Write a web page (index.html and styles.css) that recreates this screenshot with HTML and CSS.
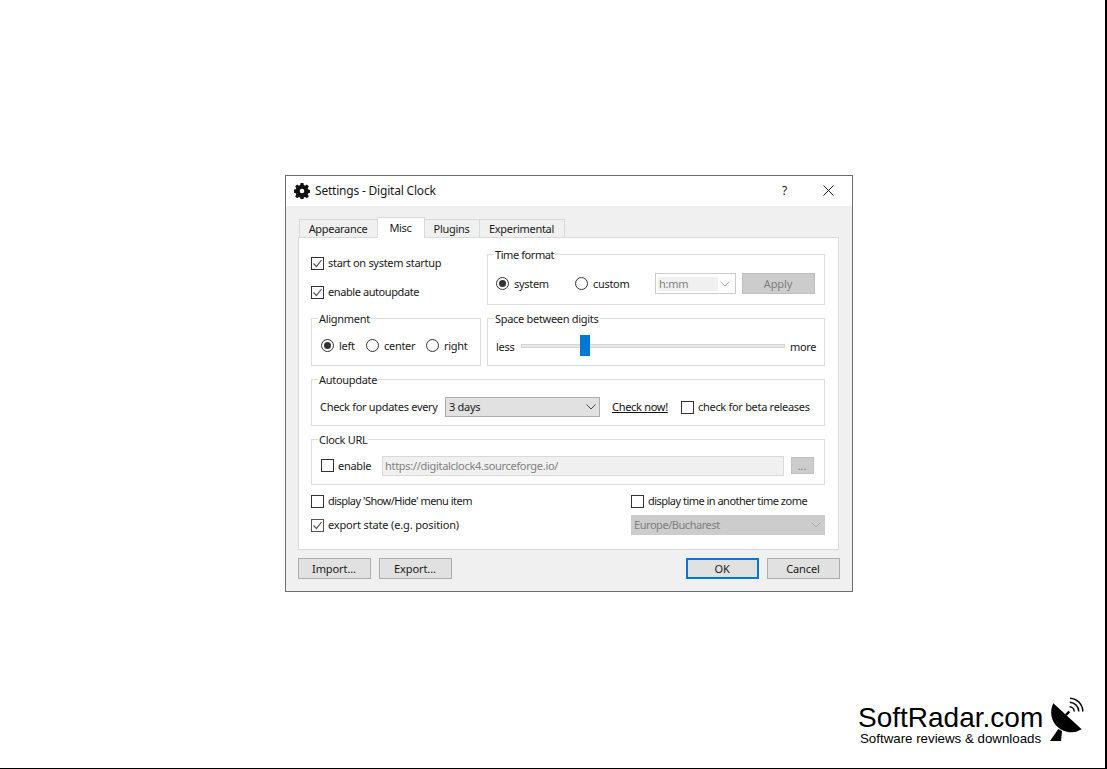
FILE: index.html
```html
<!DOCTYPE html>
<html lang="en">
<head>
<meta charset="utf-8">
<title>Settings - Digital Clock</title>
<link rel="stylesheet" href="styles.css">
</head>
<body>
<div class="page">
  <section class="dialog">
    <header class="titlebar">
      <svg class="gear" viewBox="0 0 16 16"><path d="M6.600 0h2.800l.4 2.100 1.300.6L12.900 1.500l2 2-1.200 1.800.5 1.300 2 .4v2.800l-2 .4-.5 1.300 1.200 1.800-2 2-1.800-1.200-1.300.5-.4 2.100H6.600l-.4-2.100-1.300-.5-1.800 1.200-2-2 1.200-1.800-.5-1.300-2-.4V6.600l2-.4.5-1.300L1.100 3.500l2-2 1.800 1.200 1.300-.6zM8 5.700a2.300 2.300 0 1 0 0 4.600 2.300 2.300 0 0 0 0-4.600z" fill-rule="evenodd"/></svg>
      <span class="title">Settings - Digital Clock</span>
      <span class="help">?</span>
      <svg class="close" viewBox="0 0 11 11"><path d="M.5.5l10 10M10.500.5l-10 10"/></svg>
    </header>
    <div class="body">
      <nav class="tabs">
        <span class="tab t1">Appearance</span>
        <span class="tab active t2">Misc</span>
        <span class="tab t3">Plugins</span>
        <span class="tab t4">Experimental</span>
      </nav>
      <div class="pane">
        <div class="grid">
          <div class="stack">
            <label class="check"><span class="box on"><svg viewBox="0 0 11 11"><path d="M1.500 5.500l3 3 5-6.500"/></svg></span>start on system startup</label>
            <label class="check tight-1"><span class="box on"><svg viewBox="0 0 11 11"><path d="M1.500 5.500l3 3 5-6.500"/></svg></span>enable autoupdate</label>
          </div>
          <div class="group g-time">
            <span class="legend tight-1">Time format</span>
            <span class="radio on"></span><span class="lbl w-system">system</span>
            <span class="radio"></span><span class="lbl w-custom">custom</span>
            <span class="combo-edit"><span class="edit-val">h:mm</span><svg class="chev light" viewBox="0 0 10 6"><path d="M.5.5L5 5 9.500.5"/></svg></span>
            <span class="btn disabled apply">Apply</span>
          </div>
          <div class="group g-align">
            <span class="legend">Alignment</span>
            <span class="radio on"></span><span class="lbl w-left">left</span>
            <span class="radio"></span><span class="lbl w-center">center</span>
            <span class="radio"></span><span class="lbl">right</span>
          </div>
          <div class="group g-space">
            <span class="legend">Space between digits</span>
            <span class="lbl less">less</span>
            <div class="slider"><span class="groove"></span><span class="thumb"></span></div>
            <span class="lbl more">more</span>
          </div>
          <div class="group wide g-update">
            <span class="legend">Autoupdate</span>
            <span class="lbl w-every">Check for updates every</span>
            <span class="combo days"><span>3 days</span><svg class="chev" viewBox="0 0 10 6"><path d="M.5.5L5 5 9.500.5"/></svg></span>
            <a class="link">Check now!</a>
            <label class="check"><span class="box"></span>check for beta releases</label>
          </div>
          <div class="group wide g-url">
            <span class="legend">Clock URL</span>
            <label class="check url-check"><span class="box"></span>enable</label>
            <span class="url">https://digitalclock4.sourceforge.io/</span>
            <span class="btn disabled dots">...</span>
          </div>
        </div>
        <div class="lower">
          <div class="lower-left">
            <label class="check tight-2"><span class="box"></span>display 'Show/Hide' menu item</label>
            <label class="check loose"><span class="box on dim"><svg viewBox="0 0 11 11"><path d="M1.500 5.500l3 3 5-6.500"/></svg></span>export state (e.g. position)</label>
          </div>
          <div class="lower-right">
            <label class="check tight-2"><span class="box"></span>display time in another time zome</label>
            <span class="combo zone"><span>Europe/Bucharest</span><svg class="chev light" viewBox="0 0 10 6"><path d="M.5.5L5 5 9.500.5"/></svg></span>
          </div>
        </div>
      </div>
      <footer class="actions">
        <span class="btn">Import...</span>
        <span class="btn">Export...</span>
        <span class="spacer"></span>
        <span class="btn primary">OK</span>
        <span class="btn">Cancel</span>
      </footer>
    </div>
  </section>
  <div class="brand">
    <div class="brand-text">
      <div class="brand-name">SoftRadar.com</div>
      <div class="brand-sub">Software reviews &amp; downloads</div>
    </div>
    <svg class="dish" viewBox="0 0 36 46">
      <path d="M5.300 .3A20 20 0 0 0 33.700 26.300Z"/>
      <path d="M10.300 26L2 38h11L14 28z"/>
      <path class="feed" d="M18 12l3.300-3.500"/>
      <path class="wave" d="M21.500 3.700A5 5 0 0 1 26.300 8.500M21.800 -.8A9.500 9.500 0 0 1 30.800 8.500M22 -4.800A13.500 13.500 0 0 1 34.800 8.500"/>
    </svg>
  </div>
</div>
</body>
</html>
```
FILE: styles.css
```css
* { box-sizing: border-box; }
html, body { margin: 0; height: 100%; background: #fff; }
body { font-family: "Noto Sans", "Open Sans", sans-serif; font-size: 11px; line-height: 14px; color: #1a1a1a; letter-spacing: -0.3px; }
.page { width: 1107px; height: 769px; position: relative; border-right: 2px solid #000; border-bottom: 1px solid #000; padding: 175px 0 0 285px; overflow: hidden; }
.dialog { width: 568px; height: 417px; border: 1px solid #6e6e6e; background: #f0f0f0; display: flex; flex-direction: column; }
.titlebar { height: 30px; background: #fff; display: flex; align-items: center; padding: 0 18px 0 8px; font-size: 12px; letter-spacing: -0.2px; }
.gear { width: 16px; height: 16px; fill: #111; margin: -1px 5px 0 0; }
.title { flex: 1; }
.help { margin-right: 36px; }
.close { width: 11px; height: 11px; fill: none; stroke: #222; stroke-width: 1; margin-top: -1px; }
.body { flex: 1; display: flex; flex-direction: column; padding: 12px 12px 0; }
.tabs { display: flex; height: 20px; padding-left: 1px; align-items: flex-end; position: relative; z-index: 1; margin-bottom: -1px; }
.tab { height: 18px; margin-bottom: 1px; border: 1px solid #d9d9d9; border-bottom: 0; margin-right: -1px; display: flex; align-items: center; justify-content: center; background: #f0f0f0; padding: 1px 1px 0 0; }
.tab.active { height: 21px; margin-bottom: 0; background: #fff; padding-top: 0; position: relative; z-index: 1; }
.t1 { width: 79px; }
.t2 { width: 48px; }
.t3 { width: 56px; }
.t4 { width: 86px; }
.pane { width: 541px; height: 313px; background: #fff; border: 1px solid #d9d9d9; padding: 16px 0 0 12px; }
.grid { display: grid; grid-template-columns: 170px 338px; column-gap: 6px; grid-template-rows: 51px 48px 47px 46px; row-gap: 13px; }
.group { border: 1px solid #dcdcdc; position: relative; display: flex; align-items: center; }
.legend { position: absolute; left: 6px; top: -7px; background: #fff; padding: 0 1px; height: 14px; }
.wide { grid-column: 1 / 3; }
.tight-1 { letter-spacing: -0.42px; }
.tight-2 { letter-spacing: -0.52px; }
.loose { letter-spacing: -0.15px; }
.stack { display: flex; flex-direction: column; gap: 15px; padding-top: 2px; }
.check { display: flex; align-items: center; height: 14px; white-space: nowrap; }
.box { width: 13px; height: 13px; border: 1px solid #333; margin-right: 4px; flex: none; display: block; background: #fff; }
.box svg { display: block; width: 11px; height: 11px; fill: none; stroke: #555; stroke-width: 1.200; }
.box.dim { border-color: #555; }
.radio { width: 13px; height: 13px; border: 1px solid #333; border-radius: 50%; flex: none; display: block; position: relative; background: #fff; }
.radio.on::after { content: ""; position: absolute; inset: 2px; border-radius: 50%; background: #333; }
.lbl { margin-left: 5px; white-space: nowrap; flex: none; }
.g-time { padding: 8px 0 0 8px; }
.w-system { width: 61px; }
.w-custom { width: 62px; }
.combo-edit { width: 81px; height: 21px; border: 1px solid #ccc; padding: 2px; display: flex; align-items: center; color: #808080; flex: none; }
.edit-val { width: 60px; height: 14px; background: #f0f0f0; padding-left: 1px; }
.chev { width: 10px; height: 6px; fill: none; stroke: #444; margin-left: auto; margin-right: 3px; flex: none; }
.chev.light { stroke: #aaa; }
.btn { height: 21px; width: 73px; flex: none; background: #e1e1e1; border: 1px solid #adadad; display: flex; align-items: center; justify-content: center; padding-right: 1px; letter-spacing: -0.1px; }
.btn.disabled { background: #ccc; border-color: #bfbfbf; color: #808080; }
.apply { margin-left: 6px; }
.g-align { padding: 7px 0 0 9px; }
.w-left { width: 22px; }
.w-center { width: 37px; }
.g-align .w-left + .radio { margin-left: 5px; }
.g-align .w-center + .radio { margin-left: 5px; }
.g-space { padding: 7px 9px 0 8px; }
.less { width: 20px; margin: 2px 0 0; }
.more { width: 25px; margin: 2px 0 0; }
.slider { flex: 1; height: 21px; position: relative; margin: 0 5px; display: flex; align-items: center; }
.groove { display: block; width: 100%; height: 4px; background: #e7e7e7; border: 1px solid #d6d6d6; }
.thumb { position: absolute; left: 59px; top: 0; width: 10px; height: 21px; background: #0078d7; }
.g-update { padding: 9px 0 0 8px; }
.w-every { margin: 0; width: 125px; }
.combo { height: 20px; flex: none; background: #e1e1e1; border: 1px solid #adadad; display: flex; align-items: center; padding-left: 3px; }
.days { width: 155px; }
.link { width: 56px; color: #111; text-decoration: underline; margin-left: 12px; margin-right: 13px; white-space: nowrap; }
.g-url { padding: 7px 0 0 9px; }
.url-check { width: 61px; }
.url { width: 402px; height: 20px; border: 1px solid #d9d9d9; background: #f0f0f0; color: #808080; display: flex; align-items: center; padding-left: 2px; flex: none; }
.dots { width: 23px; height: 17px; margin-left: 7px; }
.lower { display: flex; margin-top: 9px; }
.lower-left { width: 320px; display: flex; flex-direction: column; gap: 10px; }
.lower-right { display: flex; flex-direction: column; gap: 7px; }
.zone { width: 194px; background: #ccc; border-color: #ccc; color: #808080; padding-left: 2px; letter-spacing: -0.45px; }
.actions { flex: 1; display: flex; gap: 8px; padding-top: 8px; }
.spacer { flex: 1; }
.primary { border: 2px solid #0078d7; }
.brand { position: absolute; left: 858px; top: 703px; display: flex; align-items: flex-start; font-family: "Liberation Sans", Arial, sans-serif; color: #000; letter-spacing: 0; }
.brand-text { width: 190px; }
.brand-name { font-size: 28px; line-height: 30px; white-space: nowrap; }
.brand-sub { font-size: 13.3px; line-height: 13px; padding-left: 2px; white-space: nowrap; margin-top: -1px; }
.dish { width: 36px; height: 46px; overflow: visible; display: block; flex: none; }
.dish path { fill: #000; }
.dish .feed { fill: none; stroke: #000; stroke-width: 2.500; }
.dish .wave { fill: none; stroke: #000; stroke-width: 1.500; }
```
